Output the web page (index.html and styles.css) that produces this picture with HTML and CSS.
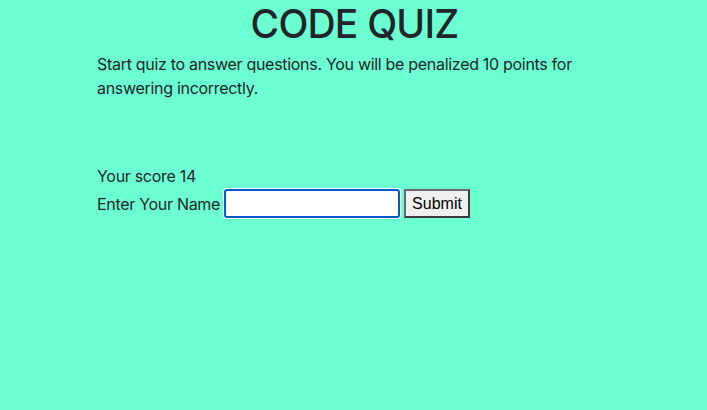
FILE: index.html
```html
<!DOCTYPE html>
<html>
<head>
<meta charset="utf-8">
<link rel="stylesheet" href="styles.css">
</head>
<body>
<header class="title-bar"><h1 class="title">CODE QUIZ</h1></header>
<main class="container">
  <p class="intro">Start quiz to answer questions. You will be penalized 10 points for answering incorrectly.</p>
  <div class="result">
    <div class="score">Your score 14</div>
    <form class="name-form">
      <label class="name-label" for="name">Enter Your Name</label>
      <input class="name-input" id="name" type="text">
      <button class="submit-btn" type="button">Submit</button>
    </form>
  </div>
</main>
</body>
</html>
```

FILE: styles.css
```css
html, body {
  margin: 0;
  padding: 0;
}
body {
  background: #6cffd2;
  color: #212529;
  font-family: Inter, "Liberation Sans", sans-serif;
  font-size: 16px;
  line-height: 24px;
  letter-spacing: -0.3px;
  height: 410px;
}
.title-bar {
  display: flex;
  justify-content: center;
}
.title {
  margin: 0 0 4px;
  font-size: 39px;
  line-height: 48px;
  font-weight: 500;
  letter-spacing: -0.8px;
  padding-left: 2px;
}
.container {
  width: 510px;
  padding-left: 97px;
}
.intro {
  margin: 0 0 64px;
}
.score {
  line-height: 24px;
}
.name-form {
  display: flex;
  align-items: center;
  gap: 4px;
  margin-top: 1px;
}
.name-input {
  width: 176px;
  height: 29px;
  box-sizing: border-box;
  border: 2px solid #0b57d0;
  border-radius: 3px;
  box-shadow: 0 0 0 1px #fff;
  background: #fff;
  outline: none;
  margin: 0;
}
.submit-btn {
  height: 29px;
  box-sizing: border-box;
  padding: 0 6px;
  font-family: "Liberation Sans", Arial, sans-serif;
  font-size: 16px;
  letter-spacing: 0;
  background: #efefef;
  color: #000;
  border: 2px solid #3b3b3b;
  border-top-color: #6a6a6a;
  border-left-color: #6a6a6a;
  border-radius: 0;
  margin: 0;
}
```
